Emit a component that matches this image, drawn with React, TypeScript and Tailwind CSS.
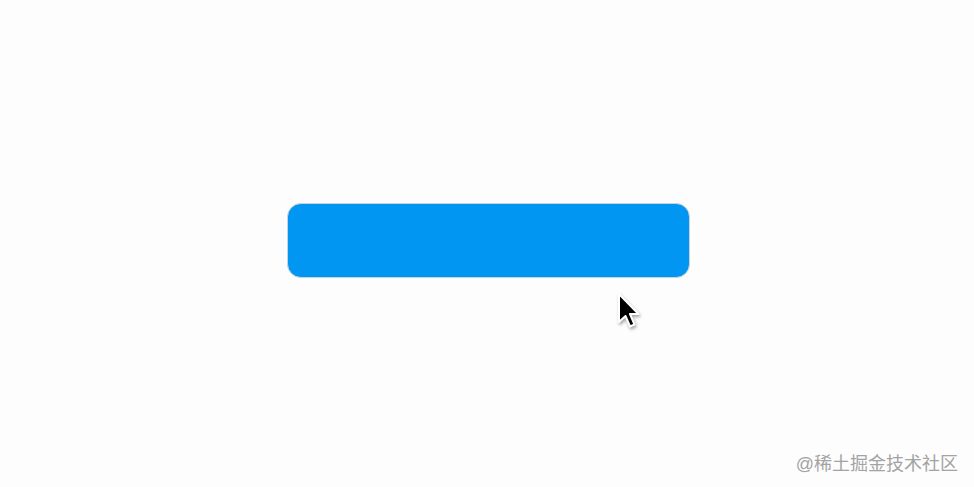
export default function App() {
  return (
    <div className="relative h-[487px] w-[974px] overflow-hidden bg-[#fdfdfd] font-['Liberation_Sans','Noto_Sans_CJK_SC',sans-serif]">
      <div className="flex h-full items-center justify-center pb-[7px] pl-[2px]">
        <button className="h-[75px] w-[403px] rounded-[14px] border border-[#c9d3db] bg-[#0096f1]" />
      </div>

      {/* mouse pointer */}
      <svg
        className="absolute left-[616px] top-[291px] drop-shadow-[1px_2px_1.5px_rgba(0,0,0,0.35)]"
        width="26"
        height="42"
        viewBox="0 0 26 42"
      >
        <path
          d="M3 3 L3 31 L9.5 25 L14 35.5 L18.5 33.5 L14 23 L22.5 23 Z"
          fill="#000"
          stroke="#fff"
          strokeWidth="2"
          strokeLinejoin="round"
        />
      </svg>

      <div className="absolute bottom-[14px] right-[16px] text-[18px] leading-none text-[#a3a3a3]">
        @稀土掘金技术社区
      </div>
    </div>
  );
}
